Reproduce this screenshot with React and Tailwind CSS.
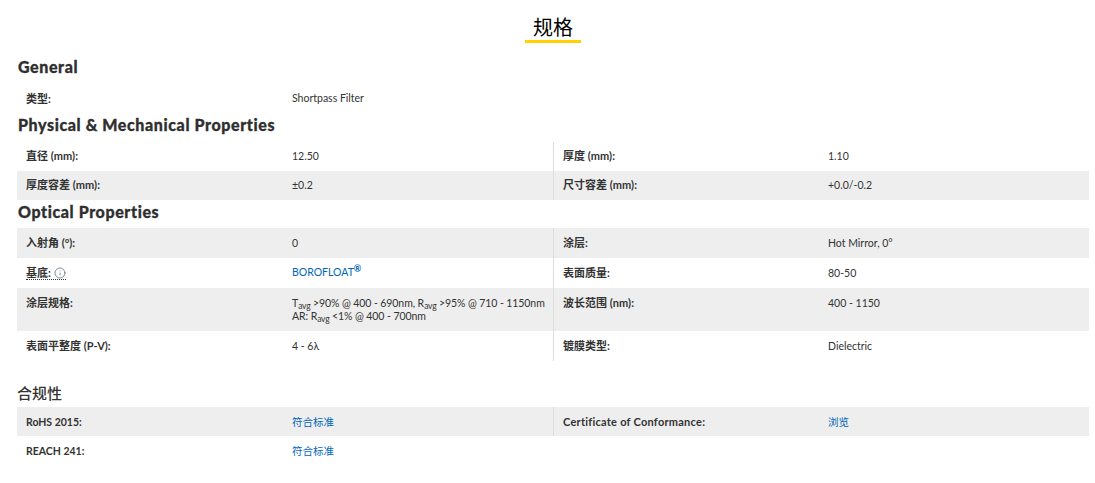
import React from 'react';
import { Info } from 'lucide-react';

const font = { fontFamily: '"Lato", "Noto Sans CJK SC", sans-serif' };

const Sub = () => <sub className="text-[8.5px] leading-none tracking-[-0.2px]">avg</sub>;

const Label = ({ children }) => (
  <div className="pl-[9px] -mt-px font-bold text-[11px] leading-[13px] text-[#333]">{children}</div>
);

const Value = ({ children, link }) => (
  <div className={`text-[10.5px] leading-[13px] whitespace-nowrap ${link ? 'text-[#0066b8]' : 'text-[#333]'}`}>
    {children}
  </div>
);

const Row = ({ cells, shaded, height = 'h-[30px]', pad = 'pt-[9px]' }) => (
  <div className={`relative grid grid-cols-[275px_262px_274px_1fr] ${pad} ${height} ${shaded ? 'bg-[#eeeeee]' : ''}`}>
    <Label>{cells[0]}</Label>
    <Value link={cells[4]}>{cells[1]}</Value>
    <Label>{cells[2]}</Label>
    <Value link={cells[5]}>{cells[3]}</Value>
    <span className="absolute left-[536px] inset-y-0 w-px bg-[#ddd]" />
  </div>
);

const Heading = ({ children, className }) => (
  <h3 className={`font-black text-[16px] leading-[22px] tracking-[0.6px] pl-px text-[#2f2f2f] [-webkit-text-stroke:0.3px_#2f2f2f] ${className}`}>{children}</h3>
);

export default function App() {
  return (
    <div className="bg-white min-h-[483px] pl-[17px] pr-[6px]" style={font}>
      <div className="flex flex-col items-center pt-[14px] h-[43px]">
        <h2 className="text-[20px] leading-[26px] text-black font-normal">规格</h2>
        <div className="w-[56px] h-[3px] bg-[#ffd200]" />
      </div>

      <Heading className="pt-[13px] pb-[6px]">General</Heading>
      <div className="grid grid-cols-[275px_1fr] pt-[8px] h-[29px]">
        <div className="mt-px"><Label>类型:</Label></div>
        <Value>Shortpass Filter</Value>
      </div>

      <Heading className="pt-px pb-[6px]">Physical &amp; Mechanical Properties</Heading>
      <Row height="h-[29px]" pad="pt-[8px]" cells={['直径 (mm):', '12.50', '厚度 (mm):', '1.10']} />
      <Row height="h-[29px]" pad="pt-[8px]" shaded cells={['厚度容差 (mm):', '±0.2', '尺寸容差 (mm):', '+0.0/-0.2']} />

      <Heading className="pt-px pb-[5px]">Optical Properties</Heading>
      <Row shaded cells={['入射角 (°):', '0', '涂层:', 'Hot Mirror, 0°']} />
      <Row
        cells={[
          <span className="inline-flex items-center gap-[3px] border-b border-dotted border-[#333] leading-[13px]">
            基底: <Info size={12} strokeWidth={1.25} className="text-[#34495e]" />
          </span>,
          <span className="relative top-[-1px] text-[#0066b8]">
            BOROFLOAT<sup className="text-[9px] font-bold leading-none">®</sup>
          </span>,
          '表面质量:',
          '80-50',
        ]}
      />
      <Row
        shaded
        height="h-[43px]"
        cells={[
          '涂层规格:',
          <div className="tracking-[-0.08px]">
            T<Sub /> &gt;90% @ 400 - 690nm, R<Sub /> &gt;95% @ 710 - 1150nm
            <br />
            AR: R<Sub /> &lt;1% @ 400 - 700nm
          </div>,
          '波长范围 (nm):',
          '400 - 1150',
        ]}
      />
      <Row cells={['表面平整度 (P-V):', '4 - 6λ', '镀膜类型:', 'Dielectric']} />

      <h3 className="pt-[21px] pb-[3px] text-[15px] leading-[22px] font-medium text-[#333]">合规性</h3>
      <Row
        height="h-[29px]"
        shaded
        cells={[
          <span className="text-[10.5px]">RoHS 2015:</span>,
          '符合标准',
          <span className="tracking-[0.25px]">Certificate of Conformance:</span>,
          '浏览',
          true,
          true,
        ]}
      />
      <div className="grid grid-cols-[275px_1fr] pt-[9px] h-[29px]">
        <Label><span className="text-[10.5px]">REACH 241:</span></Label>
        <Value link>符合标准</Value>
      </div>
    </div>
  );
}
